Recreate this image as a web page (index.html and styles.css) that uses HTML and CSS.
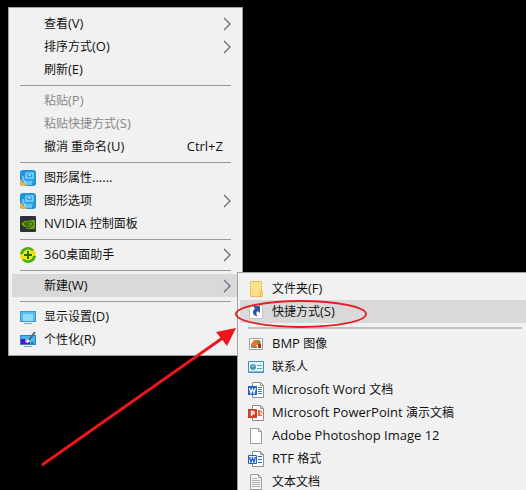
FILE: index.html
```html
<!doctype html>
<html lang="zh-CN">
    <head>
        <meta charset="UTF-8" />
        <meta name="viewport" content="width=device-width, initial-scale=1.0" />
        <title>新建快捷方式</title>
        <link rel="stylesheet" href="styles.css" />
    </head>
    <body>
        <svg width="0" height="0" class="defs">
            <symbol id="chevron" viewBox="0 0 8 14">
                <path d="M1 1l6 6-6 6" fill="none" stroke="#686b80" stroke-width="1.3" />
            </symbol>
            <symbol id="intel" viewBox="0 0 16 16">
                <rect width="16" height="16" rx="3" fill="#1c93dc" />
                <path d="M0 9l7 7H3a3 3 0 0 1-3-3z" fill="#e8b541" />
                <path d="M2 8l8-6h4v10l-3 3H7z" fill="#2ba5ea" />
                <path d="M6 3h7v5H6zM3 6v4l3 2h6M4 12l2 2h6" fill="none" stroke="#a9e0fb" stroke-width="1.1" />
                <path d="M8 5h3" stroke="#d9f4ff" />
            </symbol>
            <symbol id="nvidia" viewBox="0 0 16 16">
                <rect width="16" height="16" rx="1" fill="#2c323d" />
                <path d="M6 4h9v9H6z" fill="#67a305" />
                <path d="M1 8c3-5 9-5 12 0-3 5-9 5-12 0z" fill="#6fae08" stroke="#29380f" />
                <path d="M4 8c2-3 5-2 6 0-2 3-4 2-6 0z" fill="none" stroke="#263510" />
                <circle cx="7" cy="8" r="1" fill="#263510" />
            </symbol>
            <symbol id="q360" viewBox="0 0 16 16">
                <circle cx="8" cy="8" r="8" fill="#f5dc12" />
                <path d="M0 7a8 8 0 0 1 14-4l-2 1C8 1 4 3 3 7zM16 9a8 8 0 0 1-14 4l2-1c4 3 8 1 9-3z" fill="#43ad1d" />
                <circle cx="8" cy="8" r="5" fill="#f3e41c" />
                <path d="M8 4v8M4 8h8" stroke="#14720d" stroke-width="2" />
            </symbol>
            <symbol id="display" viewBox="0 0 16 16">
                <path d="M0 2h16v11H0z" fill="#4298c8" />
                <path d="M1 3h14v9H1z" fill="#55bdf4" />
                <path d="M3 5h10v7H3z" fill="#8fd9fb" />
                <path d="M4 14.500h8" stroke="#80a8be" />
            </symbol>
            <symbol id="personal" viewBox="0 0 16 16">
                <path d="M0 3h16v10H0z" fill="#3083b8" />
                <path d="M1 4h14v8H1z" fill="#45b5f5" />
                <path d="M1 7h4l1 3h4v2H1z" fill="#5010df" />
                <path d="M5 10l3-3 2 2-2 2z" fill="#fff" />
                <path d="M9 8l6-8" stroke="#59636d" stroke-width="2" />
                <path d="M11 11h3" stroke="#174a9e" />
                <path d="M4 14.500h8" stroke="#80a8be" />
            </symbol>
            <symbol id="folder" viewBox="0 0 16 16">
                <path d="M2.500.500h11v10h1v5h-12z" fill="#fbe08a" stroke="#e9c45c" />
                <path d="M12.500 10v5.500" stroke="#dfb443" />
            </symbol>
            <symbol id="shortcut" viewBox="0 0 16 16">
                <path d="M1.500 1.500h13v13h-13z" fill="#fff" stroke="#c4c4c4" />
                <path d="M5 2h7v7L9.500 7c-2 2-1 4 0 5.500-5-1-6-5-2.500-8z" fill="#285aa4" />
            </symbol>
            <symbol id="bmp" viewBox="0 0 16 16">
                <path d="M1.500 2.500h13v11h-13z" fill="#fff" stroke="#a0a0a0" />
                <path d="M3 8l3-4h6l1 4v1H3z" fill="#ee7228" />
                <path d="M3 9h5v3H3z" fill="#a08367" />
                <path d="M9 5h3v3H9zM7 10h2v2H7z" fill="#57a133" />
                <path d="M10 8h3v4h-3z" fill="#a92d24" />
            </symbol>
            <symbol id="contact" viewBox="0 0 16 16">
                <path d="M.500 2.500h15v11H.500z" fill="#e6f5fb" stroke="#3c8fb4" />
                <path d="M1 12.500h14" stroke="#81bfd7" />
                <circle cx="5" cy="8" r="3" fill="#4b91b2" />
                <circle cx="5" cy="7" r="1" fill="#e0c29b" />
                <path d="M9 6.500h5M9 9.500h5" stroke="#5aa4c6" />
            </symbol>
            <symbol id="page" viewBox="0 0 16 16">
                <path d="M2.500.500h8l3 3v12h-11z" fill="#fff" stroke="#9c9c9c" />
                <path d="M10.500.500v3h3" fill="none" stroke="#9c9c9c" />
            </symbol>
            <symbol id="word" viewBox="0 0 16 16">
                <path d="M4.500.500h8l3 3v12h-11z" fill="#fff" stroke="#8a8f98" />
                <path d="M12.500.500v3h3" fill="none" stroke="#8a8f98" />
                <path d="M10 5.500h4M10 7.500h4M10 9.500h4M10 11.500h4" stroke="#3f78cb" />
                <path d="M0 4h9v9H0z" fill="#2262c0" />
                <path d="M1.500 6l1.500 5 1.500-4L6 11l1.500-5" fill="none" stroke="#fff" stroke-width="1.200" />
            </symbol>
            <symbol id="ppt" viewBox="0 0 16 16">
                <path d="M4.500.500h8l3 3v12h-11z" fill="#fff" stroke="#8f8a88" />
                <path d="M12.500.500v3h3" fill="none" stroke="#8f8a88" />
                <path d="M10 5v6h4v-1l-2-1V5z" fill="#ef6a43" />
                <path d="M13 5v3h2" fill="none" stroke="#ef6a43" />
                <path d="M0 4h9v9H0z" fill="#cd4220" />
                <path d="M3.500 11V6.500h1.500a1 1 0 0 1 0 2.500H3.500" fill="none" stroke="#fff" stroke-width="1.300" />
            </symbol>
            <symbol id="rtf" viewBox="0 0 16 16">
                <path d="M4.500.500h8l3 3v12h-11z" fill="#fff" stroke="#8a8f98" />
                <path d="M12.500.500v3h3" fill="none" stroke="#8a8f98" />
                <path d="M10 5.500h4M10 8.500h4M10 11.500h4" stroke="#2262c0" />
                <path d="M.500 4.500h8v8h-8z" fill="#e7effb" stroke="#2262c0" />
                <path d="M1.500 6l1.500 5 1.500-4L6 11l1.500-5" fill="none" stroke="#2262c0" stroke-width="1.300" />
            </symbol>
            <symbol id="text" viewBox="0 0 16 16">
                <path d="M2.500.500h8l3 3v12h-11z" fill="#f4f4f4" stroke="#9c9c9c" />
                <path d="M10.500.500v3h3" fill="none" stroke="#9c9c9c" />
                <path d="M4 4.500h5M4 6.500h8M4 8.500h8M4 10.500h8M4 12.500h8" stroke="#b1b1b1" />
            </symbol>
        </svg>

        <main class="desktop">
            <ul class="menu">
                <li><button class="item"><span class="icon"></span><span>查看<span class="latin">(V)</span></span><svg class="chevron"><use href="#chevron" /></svg></button></li>
                <li><button class="item"><span class="icon"></span><span>排序方式<span class="latin">(O)</span></span><svg class="chevron"><use href="#chevron" /></svg></button></li>
                <li><button class="item"><span class="icon"></span><span>刷新<span class="latin">(E)</span></span></button></li>
                <li class="separator"></li>
                <li><button class="item" disabled><span class="icon"></span><span>粘贴<span class="latin">(P)</span></span></button></li>
                <li><button class="item" disabled><span class="icon"></span><span>粘贴快捷方式<span class="latin">(S)</span></span></button></li>
                <li><button class="item"><span class="icon"></span><span>撤消 重命名<span class="latin">(U)</span></span><span class="key latin">Ctrl+Z</span></button></li>
                <li class="separator"></li>
                <li><button class="item"><svg class="icon"><use href="#intel" /></svg><span>图形属性<span class="latin">......</span></span></button></li>
                <li><button class="item"><svg class="icon"><use href="#intel" /></svg><span>图形选项</span><svg class="chevron"><use href="#chevron" /></svg></button></li>
                <li><button class="item"><svg class="icon"><use href="#nvidia" /></svg><span><span class="latin">NVIDIA </span>控制面板</span></button></li>
                <li class="separator"></li>
                <li><button class="item"><svg class="icon"><use href="#q360" /></svg><span><span class="latin">360</span>桌面助手</span><svg class="chevron"><use href="#chevron" /></svg></button></li>
                <li class="separator"></li>
                <li class="parent">
                    <button class="item active"><span class="icon"></span><span>新建<span class="latin">(W)</span></span><svg class="chevron"><use href="#chevron" /></svg></button>
                    <ul class="menu submenu">
                        <li><button class="item"><svg class="icon"><use href="#folder" /></svg><span>文件夹<span class="latin">(F)</span></span></button></li>
                        <li><button class="item active"><svg class="icon"><use href="#shortcut" /></svg><span>快捷方式<span class="latin">(S)</span></span></button></li>
                        <li class="separator"></li>
                        <li><button class="item"><svg class="icon"><use href="#bmp" /></svg><span><span class="latin">BMP </span>图像</span></button></li>
                        <li><button class="item"><svg class="icon"><use href="#contact" /></svg><span>联系人</span></button></li>
                        <li><button class="item"><svg class="icon"><use href="#word" /></svg><span><span class="latin">Microsoft Word </span>文档</span></button></li>
                        <li><button class="item"><svg class="icon"><use href="#ppt" /></svg><span><span class="latin">Microsoft PowerPoint </span>演示文稿</span></button></li>
                        <li><button class="item"><svg class="icon"><use href="#page" /></svg><span class="latin">Adobe Photoshop Image 12</span></button></li>
                        <li><button class="item"><svg class="icon"><use href="#rtf" /></svg><span><span class="latin">RTF </span>格式</span></button></li>
                        <li><button class="item"><svg class="icon"><use href="#text" /></svg><span>文本文档</span></button></li>
                    </ul>
                </li>
                <li class="separator"></li>
                <li><button class="item"><svg class="icon"><use href="#display" /></svg><span>显示设置<span class="latin">(D)</span></span></button></li>
                <li><button class="item"><svg class="icon"><use href="#personal" /></svg><span>个性化<span class="latin">(R)</span></span></button></li>
            </ul>

            <!-- red circle and arrow pointing at the shortcut entry -->
            <svg class="annotation" width="526" height="490" viewBox="0 0 526 490">
                <ellipse cx="301" cy="314" rx="65" ry="13" fill="none" stroke="#e61c23" stroke-width="1.800" />
                <path d="M42 465L224 337" stroke="#ee151c" stroke-width="2.800" />
                <path d="M236 328l-20 4 11 14z" fill="#ee151c" />
            </svg>
        </main>
    </body>
</html>
```
FILE: styles.css
```css
* {
    box-sizing: border-box;
}
body {
    margin: 0;
    background: #000;
    font-family: "Open Sans", "Noto Sans CJK SC", sans-serif;
    font-size: 12px;
}
.defs {
    position: absolute;
}
.desktop {
    position: relative;
    height: 100vh;
    padding: 7px 8px;
    overflow: hidden;
}
.menu {
    width: 235px;
    margin: 0;
    padding: 4px 3px;
    list-style: none;
    background: #f1f1f1;
    border: 1px solid #a0a0a0;
}
.item {
    display: flex;
    align-items: center;
    gap: 8px;
    width: 100%;
    height: 23px;
    padding: 0 8px;
    border: none;
    background: none;
    color: #111;
    font: inherit;
    line-height: 23px;
    text-align: left;
    white-space: pre;
}
.item:hover,
.item.active {
    background: #d9d9d9;
}
.item:disabled {
    background: none;
    color: #888;
}
.latin {
    font-size: 13px;
}
.icon {
    flex: none;
    width: 16px;
    height: 16px;
}
.chevron {
    flex: none;
    width: 8px;
    height: 14px;
    margin-left: auto;
}
.key {
    margin-left: auto;
    padding-right: 8px;
}
.separator {
    height: 8px;
    padding: 4px 8px 0;
}
.separator::before {
    content: "";
    display: block;
    height: 1px;
    background: #999;
}
.parent {
    position: relative;
}
.submenu {
    position: absolute;
    top: -2px;
    left: calc(100% - 2px);
    z-index: 1;
    width: calc(100vw - 230px);
    padding: 4px 2px;
}
.submenu .separator {
    height: 9px;
}
.submenu .separator::before {
    height: 2px;
    background: #c0c0c0;
}
.annotation {
    position: absolute;
    top: 0;
    left: 0;
    z-index: 2;
    pointer-events: none;
}
```
